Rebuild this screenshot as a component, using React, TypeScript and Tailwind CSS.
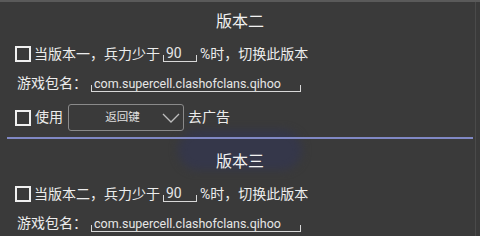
import React from "react";

function Checkbox() {
  return <span className="w-[16px] h-[16px] border-2 border-[#f0f0f0] shrink-0" />;
}

function EditText({ value, width }: { value: string; width: string }) {
  return (
    <span className={`relative flex items-end h-[16px] ${width} border-b border-[#d8d8d8]`}>
      <span className="absolute left-0 bottom-0 h-[6px] border-l border-[#d8d8d8]" />
      <span className="absolute right-0 bottom-0 h-[6px] border-r border-[#d8d8d8]" />
      <span className="pl-[3px] leading-[15px] text-[#e6e6e6]">{value}</span>
    </span>
  );
}

function Version({ title, prev }: { title: string; prev: string }) {
  return (
    <>
      <div className="h-[36px] flex items-center justify-center text-[16px] text-[#f2f2f2]">
        {title}
      </div>
      <div className="h-[28px] flex items-center pl-[15px] text-[14px] text-[#ececec]">
        <Checkbox />
        <span className="ml-[3px]">当{prev}，兵力少于</span>
        <span className="ml-[3px]">
          <EditText value="90" width="w-[34px]" />
        </span>
        <span className="ml-[3px]">%时，切换此版本</span>
      </div>
      <div className="h-[31px] flex items-center pl-[17px] text-[14px] text-[#ececec]">
        <span>游戏包名：</span>
        <span className="ml-[4px] text-[12.5px]">
          <EditText value="com.supercell.clashofclans.qihoo" width="w-[210px]" />
        </span>
      </div>
    </>
  );
}

export default function App() {
  return (
    <div
      className="relative w-[480px] h-[236px] overflow-hidden bg-[#3a3a3a] border-t-2 border-[#5a5a5a]"
      style={{ fontFamily: 'Roboto, "Noto Sans CJK SC", sans-serif' }}
    >
      <div className="absolute right-[4px] top-0 bottom-0 w-px bg-[#4a4a4a]" />
      <div className="absolute left-[178px] top-[128px] w-[124px] h-[40px] rounded-full bg-[#35374a] blur-[4px]" />
      <div className="relative flex flex-col pt-[2px]">
        <Version title="版本二" prev="版本一" />
        <div className="h-[37px] flex items-center pl-[15px] text-[14px] text-[#ececec]">
          <Checkbox />
          <span className="ml-[4px]">使用</span>
          <div className="ml-[5px] w-[116px] h-[27px] border border-[#8a8a8a] rounded-[3px] flex items-center">
            <span className="flex-1 text-center text-[11.5px] pl-[14px] text-[#e0e0e0]">返回键</span>
            <svg width="18" height="12" viewBox="0 0 18 12" className="mr-[3px]">
              <path d="M1 2 L9 10 L17 2" fill="none" stroke="#bdbdbd" strokeWidth="1.3" />
            </svg>
          </div>
          <span className="ml-[4px]">去广告</span>
        </div>
        <div className="mx-[7px] mt-[1px] h-[2px] bg-[#8088c4]" />
        <div className="mt-[5px] flex flex-col">
          <Version title="版本三" prev="版本二" />
        </div>
      </div>
    </div>
  );
}
